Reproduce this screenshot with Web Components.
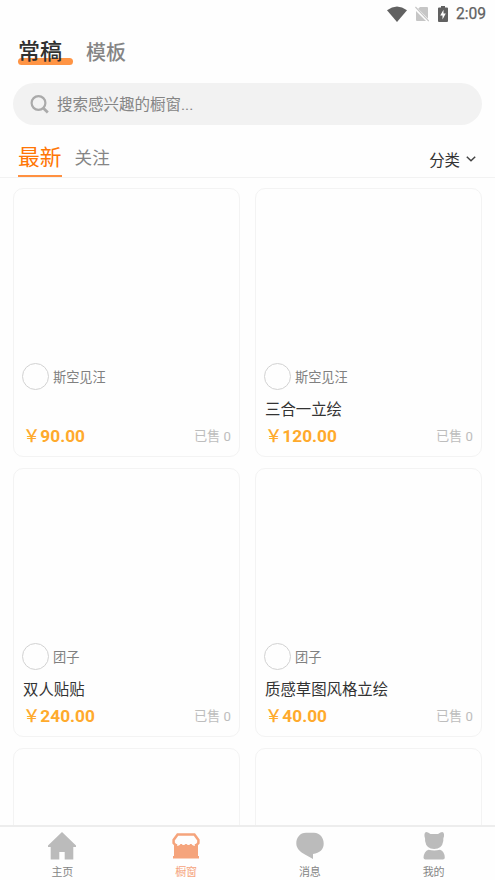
<!DOCTYPE html>
<html lang="zh-CN">
<head>
<meta charset="utf-8">
<title>橱窗</title>
<style>
html, body { margin: 0; height: 100%; background: #fefefe; }
body { font-family: Roboto, "Noto Sans CJK SC", sans-serif; overflow: hidden; }
</style>
</head>
<body>
<shop-app></shop-app>
<script>
const define = (name, markup) => {
  const template = document.createElement('template');
  template.innerHTML = markup;
  customElements.define(name, class extends HTMLElement {
    constructor() {
      super();
      this.attachShadow({ mode: 'open' }).append(template.content.cloneNode(true));
    }
  });
};

define('status-bar', `
<style>
:host { display: flex; height: 27px; box-sizing: border-box; padding-right: 9px; justify-content: flex-end; align-items: center; color: #616161; font-size: 15.6px; }
svg { display: block; }
.wifi { margin-right: 8px; } .sim { margin-right: 9px; } .battery { margin-right: 8px; }
span { line-height: 25px; padding-top: 2px; -webkit-text-stroke: .25px currentColor; }
</style>
<svg class="wifi" width="20" height="16" viewBox="0 0 20 16"><path d="M0 4.2Q10-3.2 20 4.2L10 16Z" fill="#616161"/></svg>
<svg class="sim" width="14" height="16" viewBox="0 0 14 16"><path d="M5 1H12Q13 1 13 2V12.7L3.2 2.8ZM1 5.1L11 15H2Q1 15 1 14Z" fill="#c6c6c6"/><path d="M.4 1L13.8 15.1" stroke="#c6c6c6" stroke-width="1.2"/></svg>
<svg class="battery" width="10" height="16" viewBox="0 0 10 16"><path d="M3 0H7V1.5H9Q10 1.5 10 2.5V15Q10 16 9 16H1Q0 16 0 15V2.5Q0 1.5 1 1.5H3Z" fill="#616161"/><path d="M5.5 3.8L2.2 9.4H4.5V13.4L7.8 7.6H5.5Z" fill="#fff"/></svg>
<span>2:09</span>`);

define('page-tabs', `
<style>
:host { display: flex; height: 56px; box-sizing: border-box; padding: 7px 18px 0; gap: 13px; align-items: flex-start; font-weight: 500; }
.on { width: 55px; height: 31px; line-height: 36px; font-size: 22px; color: #303030; position: relative; white-space: nowrap; z-index: 0; }
.on::after { content: ""; position: absolute; z-index: -1; left: 0; bottom: 0; width: 55px; height: 7px; border-radius: 4px; background: #ff9444; }
.off { font-size: 20px; line-height: 38px; color: #858585; }
</style>
<div class="on"><slot name="active"></slot></div><div class="off"><slot></slot></div>`);

define('search-box', `
<style>
:host { display: flex; margin: 0 13px; height: 42px; border-radius: 21px; background: #f2f2f2; align-items: center; padding-left: 17px; gap: 8px; font-size: 15.5px; color: #858585; }
svg { display: block; }
span { line-height: 45px; height: 42px; }
</style>
<svg width="19" height="20" viewBox="0 0 19 20" fill="none" stroke="#aaa"><circle cx="8.5" cy="9" r="6.9" stroke-width="2.2"/><path d="M13.2 14L17.8 18.4" stroke-width="2.8"/></svg>
<span><slot></slot></span>`);

define('filter-bar', `
<style>
:host { display: flex; height: 53px; box-sizing: border-box; border-bottom: 1px solid #f2f2f2; padding: 12px 19px 0 18px; color: #858585; }
.on { font-size: 21.8px; line-height: 41px; height: 38px; border-bottom: 2px solid #ff9040; color: #ff7605; }
.off { font-size: 17.6px; line-height: 43px; margin-left: 13px; }
.sort { margin-left: auto; display: flex; align-items: center; height: 44px; gap: 6px; font-size: 15.4px; color: #333; }
</style>
<div class="on"><slot name="active"></slot></div><div class="off"><slot></slot></div>
<div class="sort"><slot name="sort"></slot><svg width="10" height="6" viewBox="0 0 10 6" fill="none" stroke="#444" stroke-width="1.5"><path d="M.8.8L5 4.8L9.2.8"/></svg></div>`);

define('product-card', `
<style>
:host { display: flex; flex-direction: column; height: 269px; box-sizing: border-box; border: 1px solid #f3f3f3; border-radius: 10px; padding: 0 8px 9px 9px; }
.cover { flex: 1; }
.author { display: flex; align-items: center; gap: 4px; height: 27px; margin-left: -1px; font-size: 13.2px; color: #808080; }
i { width: 27px; height: 27px; box-sizing: border-box; border: 1px solid #d2d2d2; border-radius: 50%; }
.title { height: 24px; margin-top: 7px; line-height: 27px; font-size: 15.4px; color: #333; }
.meta { display: flex; justify-content: space-between; align-items: center; height: 22px; margin-top: 4px; line-height: 22px; }
.price { color: #ffaa2c; font-size: 17.3px; font-weight: 700; }
.sold { color: #bdbdbd; font-size: 13.2px; line-height: 22px; padding-top: 2px; }
</style>
<div class="cover"></div>
<div class="author"><i></i><slot name="author"></slot></div>
<div class="title"><slot></slot></div>
<div class="meta"><span class="price"><slot name="price"></slot></span><span class="sold"><slot name="sold"></slot></span></div>`);

define('product-grid', `
<style>
:host { display: grid; grid-template-columns: 227px 227px; column-gap: 15px; row-gap: 11px; align-content: start; padding: 10px 13px 0; flex: 1; min-height: 0; overflow: hidden; }
</style><slot></slot>`);

define('nav-item', `
<style>
:host { flex: 1; display: flex; flex-direction: column; align-items: center; padding: 4px 0 0 1px; font-size: 11px; color: #858585; }
:host([active]) { color: #f5a47c; }
::slotted(svg) { display: block; width: 28px; height: 29px; flex: none; }
span { line-height: 14px; margin-top: 6px; }
</style><slot name="icon"></slot><span><slot></slot></span>`);

define('bottom-nav', `
<style>:host { display: flex; height: 55px; box-sizing: border-box; border-top: 2px solid #ededed; background: #fefefe; }</style><slot></slot>`);

define('shop-app', `
<style>:host { display: flex; flex-direction: column; height: 880px; } .yen { font-weight: 500; }</style>
<status-bar></status-bar>
<page-tabs><span slot="active">常稿</span>模板</page-tabs>
<search-box>搜索感兴趣的橱窗...</search-box>
<filter-bar><span slot="active">最新</span>关注<span slot="sort">分类</span></filter-bar>
<product-grid>
<product-card><span slot="author">斯空见汪</span><span slot="price"><span class="yen">￥</span>90.00</span><span slot="sold">已售 0</span></product-card>
<product-card><span slot="author">斯空见汪</span>三合一立绘<span slot="price"><span class="yen">￥</span>120.00</span><span slot="sold">已售 0</span></product-card>
<product-card><span slot="author">团子</span>双人贴贴<span slot="price"><span class="yen">￥</span>240.00</span><span slot="sold">已售 0</span></product-card>
<product-card><span slot="author">团子</span>质感草图风格立绘<span slot="price"><span class="yen">￥</span>40.00</span><span slot="sold">已售 0</span></product-card>
<product-card></product-card>
<product-card></product-card>
</product-grid>
<bottom-nav>
<nav-item><svg slot="icon" viewBox="0 0 28 29" fill="#bbb"><path d="M14 1L28 14.5V16H25.3V28.5H16.7V21H11.3V28.5H2.7V16H0V14.5Z"/></svg>主页</nav-item>
<nav-item active><svg slot="icon" viewBox="0 0 28 29"><path d="M2 13H26V25H27V27.5H1V25H2Z" fill="#f5a47c"/><path d="M6 2.8H22L26.3 9V12.2Q24.7 15 22.4 15Q20.5 15 18.8 12.2Q16.8 15.8 14 12.6Q11.2 15.8 9.2 12.2Q7.5 15 5.6 15Q3.3 15 1.7 12.2V9Z" fill="#fefefe"/><path d="M5.2 14.5Q3.2 14.4 1.6 12V9L5.6 3.6H22.4L26.4 9V12Q24.8 14.4 22.8 14.5" fill="none" stroke="#f5a47c" stroke-width="2.5"/></svg>橱窗</nav-item>
<nav-item><svg slot="icon" viewBox="0 0 28 29" fill="#bbb"><path d="M10 1.7H18C24 1.7 27.7 6.7 27.7 12.7C27.7 18.4 23.8 22 17 23V28L8.5 23.2C4 21 .3 17 .3 12.5C.3 6.5 4 1.7 10 1.7Z"/></svg>消息</nav-item>
<nav-item><svg slot="icon" viewBox="0 0 28 29" fill="#bbb"><path d="M4.5 3Q5.2 0 8 1.5L10.5 3H18L20.5 1.5Q23.3 0 24 3Q24.4 5.5 23.3 7.7V10Q22 18 14.2 18Q6.4 18 5.1 10V7.7Q4.1 5.5 4.5 3ZM8.5 18.8Q14.2 20.4 20 18.8Q24.5 20.5 24.8 26.5Q24.8 28.5 22.8 28.5H5.5Q3.5 28.5 3.5 26.5Q4 20.5 8.5 18.8Z"/></svg>我的</nav-item>
</bottom-nav>`);
</script>
</body>
</html>
